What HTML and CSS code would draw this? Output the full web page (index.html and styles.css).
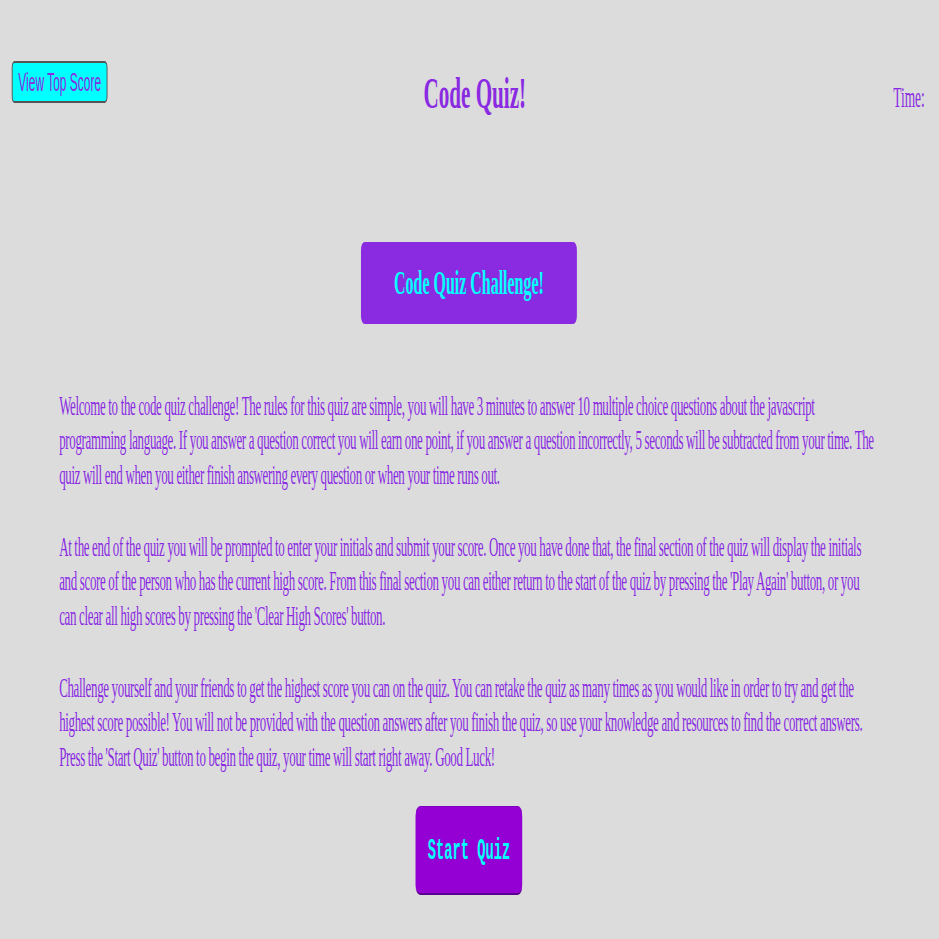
FILE: index.html
```html
<!DOCTYPE html>
<html lang="en">
<head>
<meta charset="utf-8">
<title>Code Quiz</title>
<link rel="stylesheet" href="styles.css">
</head>
<body>
<div class="frame">
  <div class="page">
    <header class="top-bar">
      <div class="top-left">
        <button class="score-btn">View Top Score</button>
      </div>
      <h1 class="title">Code Quiz!</h1>
      <div class="top-right">
        <span class="timer">Time:</span>
      </div>
    </header>
    <main class="intro">
      <h2 class="challenge">Code Quiz Challenge!</h2>
      <div class="rules">
        <p>Welcome to the code quiz challenge! The rules for this quiz are simple, you will have 3 minutes to answer 10 multiple choice questions about the javascript programming language. If you answer a question correct you will earn one point, if you answer a question incorrectly, 5 seconds will be subtracted from your time. The quiz will end when you either finish answering every question or when your time runs out.</p>
        <p>At the end of the quiz you will be prompted to enter your initials and submit your score. Once you have done that, the final section of the quiz will display the initials and score of the person who has the current high score. From this final section you can either return to the start of the quiz by pressing the 'Play Again' button, or you can clear all high scores by pressing the 'Clear High Scores' button.</p>
        <p>Challenge yourself and your friends to get the highest score you can on the quiz. You can retake the quiz as many times as you would like in order to try and get the highest score possible! You will not be provided with the question answers after you finish the quiz, so use your knowledge and resources to find the correct answers. Press the 'Start Quiz' button to begin the quiz, your time will start right away. Good Luck!</p>
      </div>
      <button class="start-btn">Start Quiz</button>
    </main>
  </div>
</div>
</body>
</html>
```
FILE: styles.css
```css
html, body {
  margin: 0;
  padding: 0;
  background: #dcdcdc;
  overflow: hidden;
}

.frame {
  width: 939px;
  height: 939px;
  overflow: hidden;
}

/* The page is laid out at a 2000px design width and squeezed horizontally
   to fit the 939px window, as in the reference capture. */
.page {
  width: 2000px;
  transform: scaleX(0.4694);
  transform-origin: 0 0;
  font-family: "Liberation Serif", "Times New Roman", serif;
  color: #8a2be2;
}

.top-bar {
  display: grid;
  grid-template-columns: 1fr auto 1fr;
  align-items: start;
  padding: 61px 30px 0 25px;
}

.top-left {
  display: flex;
}

.score-btn {
  font-family: "Liberation Sans", Arial, sans-serif;
  font-size: 25.5px;
  line-height: 30px;
  color: #8a2be2;
  background: #00ffff;
  border: 2px solid #555555;
  border-radius: 6px;
  padding: 4px 12px;
  margin: 0;
}

.title {
  margin: 7.8px 0 0 28px;
  font-size: 45px;
  line-height: 48px;
  font-weight: bold;
  color: #8a2be2;
}

.top-right {
  display: flex;
  justify-content: flex-end;
}

.timer {
  margin-top: 21.4px;
  font-size: 28.5px;
  line-height: 32px;
  color: #8a2be2;
}

.intro {
  display: flex;
  flex-direction: column;
  align-items: center;
  padding: 0 128px 0 126px;
}

.challenge {
  margin: 125.4px 0 0;
  padding: 21px 70px;
  background: #8a2be2;
  color: #00ffff;
  font-size: 34px;
  line-height: 40px;
  font-weight: bold;
  border-radius: 8px;
}

.rules {
  align-self: stretch;
  margin-top: 64.5px;
}

.rules p {
  margin: 0 0 37.5px;
  font-size: 27.5px;
  line-height: 34.5px;
  letter-spacing: -0.66px;
  color: #8a2be2;
}

.rules p:last-child {
  margin-bottom: 0;
}

.start-btn {
  margin-top: 32px;
  font-family: "Liberation Mono", "Courier New", monospace;
  font-size: 29.3px;
  line-height: 34px;
  font-weight: bold;
  color: #00ffff;
  background: #9400d3;
  border: 1px solid #8000c0;
  border-bottom: 2px solid #5c0090;
  border-radius: 10px;
  padding: 28px 25px 24px;
}
```
